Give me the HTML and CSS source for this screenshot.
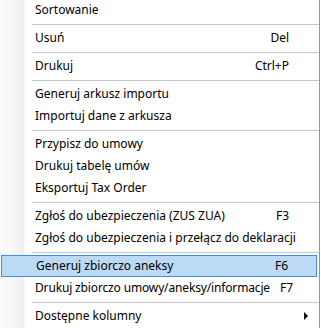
FILE: index.html
```html
<!DOCTYPE html>
<html>
<head>
<meta charset="utf-8">
<link rel="stylesheet" href="styles.css">
</head>
<body>
<div class="menu">
  <div class="item first"><span class="label">Sortowanie</span></div>
  <div class="sep"></div>
  <div class="item"><span class="label">Usuń</span><span class="key">Del</span></div>
  <div class="sep"></div>
  <div class="item"><span class="label">Drukuj</span><span class="key">Ctrl+P</span></div>
  <div class="sep"></div>
  <div class="item"><span class="label">Generuj arkusz importu</span></div>
  <div class="item"><span class="label">Importuj dane z arkusza</span></div>
  <div class="sep"></div>
  <div class="item"><span class="label">Przypisz do umowy</span></div>
  <div class="item"><span class="label">Drukuj tabelę umów</span></div>
  <div class="item"><span class="label">Eksportuj Tax Order</span></div>
  <div class="sep"></div>
  <div class="item"><span class="label">Zgłoś do ubezpieczenia (ZUS ZUA)</span><span class="key">F3</span></div>
  <div class="item"><span class="label">Zgłoś do ubezpieczenia i przełącz do deklaracji</span></div>
  <div class="sep"></div>
  <div class="item active"><span class="label">Generuj zbiorczo aneksy</span><span class="key">F6</span></div>
  <div class="item"><span class="label narrow">Drukuj zbiorczo umowy/aneksy/informacje</span><span class="key">F7</span></div>
  <div class="sep"></div>
  <div class="item"><span class="label">Dostępne kolumny</span><span class="arrow"></span></div>
</div>
</body>
</html>
```

FILE: styles.css
```css
html, body {
  margin: 0;
  padding: 0;
  background: #ffffff;
}
body {
  width: 321px;
  height: 328px;
  overflow: hidden;
}
.menu {
  width: 319px;
  height: 329px;
  margin-top: -1px;
  border-right: 1px solid #979797;
  background: linear-gradient(to right, #fcfcfc 0px, #f0f0f0 24px, #ffffff 25px, #ffffff 100%);
  display: flex;
  flex-direction: column;
  font-family: "Noto Sans", "Open Sans", sans-serif;
  font-size: 12px;
  color: #000000;
}
.item {
  height: 22px;
  box-sizing: border-box;
  display: flex;
  align-items: center;
  padding-left: 35px;
  padding-right: 30px;
  line-height: 22px;
  white-space: nowrap;
}
.item .label {
  flex: 1 0 auto;
}
.item .label.narrow {
  letter-spacing: -0.15px;
}
.item .key {
  text-align: right;
  margin-left: 10px;
}
.item.active {
  margin-left: 1px;
  margin-right: 2px;
  padding-left: 34px;
  padding-right: 28px;
  background: #bcd9f5;
  border: 1px solid #3d8fe2;
}
.sep {
  height: 6px;
  box-sizing: border-box;
  padding-top: 3px;
  margin-left: 32px;
}
.sep::before {
  content: "";
  display: block;
  height: 1px;
  background: #c6c6c6;
}
.arrow {
  width: 0;
  height: 0;
  border-top: 4px solid transparent;
  border-bottom: 4px solid transparent;
  border-left: 4px solid #000000;
  margin-right: -19px;
}
```
